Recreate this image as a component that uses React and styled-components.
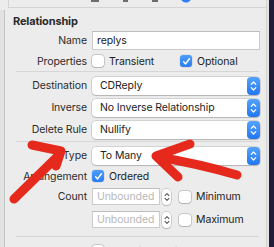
import React from "react";
import styled, { createGlobalStyle } from "styled-components";

const Global = createGlobalStyle`
  html, body { margin: 0; padding: 0; background: #ececec; overflow: hidden; }
  body { font-family: Inter, "Noto Sans", sans-serif; -webkit-font-smoothing: antialiased; }
  #root { width: 274px; height: 247px; }
`;

const Frame = styled.div`
  position: relative;
  width: 274px;
  height: 247px;
  overflow: hidden;
  display: flex;
  background: #ececec;
`;

const LeftRail = styled.div`
  flex: none;
  width: 4px;
  margin-top: 10px;
  background: #e2e2e2;
  border-right: 1px solid #c3c3c3;
`;

const Inspector = styled.div`
  flex: none;
  width: 261px;
  display: flex;
  flex-direction: column;
  border-right: 1px solid #d2d2d2;
  & > * { flex: none; }
`;

const EdgeGap = styled.div`
  flex: none;
  width: 2px;
  background: #e4e4e4;
`;

const Desktop = styled.div`
  flex: 1;
  background: #1f1d38;
`;

const TabBar = styled.div`
  height: 7px;
  margin-left: 3px;
  border-left: 1px solid #d4d4d4;
  border-bottom: 1px solid #d4d4d4;
  display: flex;
  align-items: flex-end;
  overflow: hidden;
  padding-left: 81px;
  gap: 18px;
`;

const TabIcon = styled.svg`
  flex: none;
  width: 12px;
  height: 12px;
  margin-bottom: 4px;
`;

const Title = styled.div`
  height: 20px;
  padding-left: 8px;
  padding-top: 6px;
  box-sizing: border-box;
  font-size: 11px;
  font-weight: 700;
  letter-spacing: -0.15px;
  color: #2a2a2a;
  line-height: 14px;
`;

const Row = styled.div`
  display: grid;
  grid-template-columns: 82px 168px;
  column-gap: 5px;
  align-items: center;
  height: ${(p) => p.$h}px;
  margin-top: ${(p) => p.$mt || 0}px;
`;

const Label = styled.span`
  text-align: right;
  font-size: 10.5px;
  letter-spacing: -0.1px;
  color: #2b2b2b;
  white-space: nowrap;
`;

const Separator = styled.div`
  height: 1px;
  width: 243px;
  margin-left: 11px;
  margin-top: ${(p) => p.$mt || 0}px;
  background: #d6d6d6;
`;

const TextField = styled.div`
  height: ${(p) => p.$h || 19}px;
  box-sizing: border-box;
  background: #fff;
  border: 1px solid #cbcbcb;
  border-top-color: #bdbdbd;
  display: flex;
  align-items: center;
  padding-left: 4px;
  font-size: 10.5px;
  letter-spacing: -0.1px;
  color: ${(p) => (p.$placeholder ? "#b9b9b9" : "#222")};
  width: ${(p) => (p.$w ? `${p.$w}px` : "auto")};
  flex: none;
  overflow: hidden;
  white-space: nowrap;
`;

const Popup = styled.div`
  height: 18px;
  box-sizing: border-box;
  background: #fff;
  border-radius: 4px;
  box-shadow: 0 0 0 0.5px rgba(0, 0, 0, 0.22), 0 1px 1px rgba(0, 0, 0, 0.14);
  display: flex;
  align-items: center;
  justify-content: space-between;
  padding-left: 8px;
  font-size: 10.5px;
  letter-spacing: -0.1px;
  color: #222;
`;

const BlueStepper = styled.span`
  width: 13px;
  height: 18px;
  border-radius: 4px;
  background: linear-gradient(#55a3fb, #2277f2);
  display: flex;
  align-items: center;
  justify-content: center;
`;

const SmallStepper = styled.span`
  flex: none;
  width: 9px;
  height: 16px;
  margin-left: 2px;
  border-radius: 4px;
  background: #fff;
  box-shadow: 0 0 0 0.5px rgba(0, 0, 0, 0.25), 0 1px 1px rgba(0, 0, 0, 0.12);
  display: flex;
  align-items: center;
  justify-content: center;
`;

const Controls = styled.div`
  display: flex;
  align-items: center;
`;

const CheckItem = styled.span`
  display: inline-flex;
  align-items: center;
  gap: 5px;
  font-size: 10.5px;
  letter-spacing: -0.1px;
  color: #222;
  white-space: nowrap;
  margin-left: ${(p) => p.$ml || 0}px;
  width: ${(p) => (p.$w ? `${p.$w}px` : "auto")};
`;

const Box = styled.span`
  flex: none;
  width: 12px;
  height: 12px;
  box-sizing: border-box;
  border-radius: 3px;
  background: ${(p) => (p.$on ? "linear-gradient(#4d9dfa, #2a7cf3)" : "#fff")};
  box-shadow: ${(p) =>
    p.$on
      ? "0 0 0 0.5px rgba(0,0,0,0.12)"
      : "0 0 0 0.5px rgba(0,0,0,0.3), 0 1px 1px rgba(0,0,0,0.1)"};
  display: flex;
  align-items: center;
  justify-content: center;
`;

const Overlay = styled.svg`
  position: absolute;
  left: 0;
  top: 0;
  width: 274px;
  height: 247px;
  pointer-events: none;
`;

const Chevrons = ({ color = "#fff", w = 7 }) => (
  <svg width={w} height="12" viewBox="0 0 7 12" fill="none">
    <path d="M1.2 4.4 L3.5 2 L5.8 4.4" stroke={color} strokeWidth="1.2" strokeLinecap="round" strokeLinejoin="round" />
    <path d="M1.2 7.6 L3.5 10 L5.8 7.6" stroke={color} strokeWidth="1.2" strokeLinecap="round" strokeLinejoin="round" />
  </svg>
);

const Check = ({ on }) => (
  <Box $on={on}>
    {on && (
      <svg width="9" height="9" viewBox="0 0 9 9" fill="none">
        <path d="M1.6 4.8 L3.6 6.9 L7.4 1.8" stroke="#fff" strokeWidth="1.5" strokeLinecap="round" strokeLinejoin="round" />
      </svg>
    )}
  </Box>
);

export default function App() {
  return (
    <>
      <Global />
      <Frame>
        <LeftRail />
        <Inspector>
          <TabBar>
            <TabIcon viewBox="0 0 12 12">
              <rect x="1" y="9" width="8" height="2" fill="#6d6d6d" />
            </TabIcon>
            <TabIcon viewBox="0 0 12 12">
              <rect x="3" y="9" width="5" height="2" fill="#6d6d6d" />
            </TabIcon>
            <TabIcon viewBox="0 0 12 12">
              <rect x="2" y="9" width="6" height="2" fill="#6d6d6d" />
            </TabIcon>
            <TabIcon viewBox="0 0 12 12">
              <circle cx="6" cy="6" r="5.5" fill="#2f7ff5" />
            </TabIcon>
          </TabBar>

          <Title>Relationship</Title>

          <Row $h={19} $mt={3}>
            <Label>Name</Label>
            <TextField>replys</TextField>
          </Row>
          <Row $h={18} $mt={2}>
            <Label>Properties</Label>
            <Controls>
              <CheckItem $w={88}>
                <Check />
                Transient
              </CheckItem>
              <CheckItem>
                <Check on />
                Optional
              </CheckItem>
            </Controls>
          </Row>

          <Separator $mt={1} />

          <Row $h={19} $mt={4}>
            <Label>Destination</Label>
            <Popup>
              CDReply
              <BlueStepper><Chevrons /></BlueStepper>
            </Popup>
          </Row>
          <Row $h={19} $mt={3}>
            <Label>Inverse</Label>
            <Popup>
              No Inverse Relationship
              <BlueStepper><Chevrons /></BlueStepper>
            </Popup>
          </Row>
          <Row $h={19} $mt={3}>
            <Label>Delete Rule</Label>
            <Popup>
              Nullify
              <BlueStepper><Chevrons /></BlueStepper>
            </Popup>
          </Row>

          <Separator $mt={2} />

          <Row $h={19} $mt={4}>
            <Label>Type</Label>
            <Popup>
              To Many
              <BlueStepper><Chevrons /></BlueStepper>
            </Popup>
          </Row>
          <Row $h={18} $mt={2}>
            <Label>Arrangement</Label>
            <Controls>
              <CheckItem>
                <Check on />
                Ordered
              </CheckItem>
            </Controls>
          </Row>
          <Row $h={17} $mt={3}>
            <Label>Count</Label>
            <Controls>
              <TextField $w={68} $h={17} $placeholder>Unbounded</TextField>
              <SmallStepper><Chevrons color="#555" w={6} /></SmallStepper>
              <CheckItem $ml={8}>
                <Check />
                Minimum
              </CheckItem>
            </Controls>
          </Row>
          <Row $h={17} $mt={6}>
            <Label />
            <Controls>
              <TextField $w={68} $h={17} $placeholder>Unbounded</TextField>
              <SmallStepper><Chevrons color="#555" w={6} /></SmallStepper>
              <CheckItem $ml={8}>
                <Check />
                Maximum
              </CheckItem>
            </Controls>
          </Row>

          <Separator $mt={8} />

          <Row $h={18} $mt={5}>
            <Label>Advanced</Label>
            <Controls>
              <CheckItem>
                <Check />
                Index in Spotlight
              </CheckItem>
            </Controls>
          </Row>
        </Inspector>
        <EdgeGap />
        <Desktop />

        <Overlay viewBox="0 0 274 247">
          <g stroke="#e5291d" strokeWidth="9" strokeLinecap="round" strokeLinejoin="round" fill="none">
            <path d="M14 199 L58 156" />
            <path d="M32 145 L61 151 L56 166" />
            <path d="M190 144 L156 156 L178 177" />
            <path d="M158 157 Q200 164 237 175" />
          </g>
        </Overlay>
      </Frame>
    </>
  );
}
